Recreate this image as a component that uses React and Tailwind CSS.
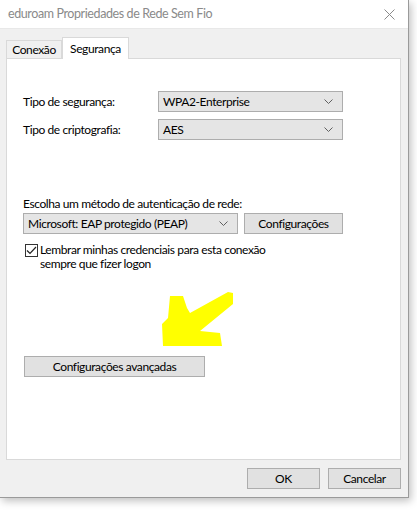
import React from "react";

const font = { fontFamily: 'Lato, "Noto Sans", sans-serif', letterSpacing: "-0.4px" };

function Chevron() {
  return (
    <svg width="9" height="5" viewBox="0 0 9 5" className="shrink-0">
      <path d="M0.5 0.5 L4.5 4.5 L8.5 0.5" fill="none" stroke="#606060" strokeWidth="1" />
    </svg>
  );
}

function Select({ value, className }) {
  return (
    <div className={`h-[21px] flex items-center justify-between pl-[4px] pr-[9px] bg-[#e5e5e5] border border-[#adadad] text-[12px] text-black ${className}`}>
      <span>{value}</span>
      <Chevron />
    </div>
  );
}

function Button({ children, className }) {
  return (
    <div className={`h-[21px] flex items-center justify-center bg-[#e1e1e1] border border-[#adadad] text-[12px] text-black ${className}`}>
      {children}
    </div>
  );
}

export default function App() {
  return (
    <div className="w-[417px] h-[514px] bg-white overflow-hidden" style={font}>
      <div className="w-[409px] h-[498px] flex flex-col bg-[#f0f0f0] border-r border-b border-[#9a9a9a] shadow-[2px_3px_8px_rgba(0,0,0,0.25)]">
        {/* Title bar */}
        <div className="h-[29px] bg-white flex items-center justify-between pl-[8px] pr-[13px] border-b border-[#e8e8e8]">
          <span className="text-[12.5px] text-[#8a8a8a]">eduroam Propriedades de Rede Sem Fio</span>
          <svg width="11" height="11" viewBox="0 0 11 11">
            <path d="M0.5 0.5 L10.5 10.5 M10.5 0.5 L0.5 10.5" stroke="#8a8a8a" strokeWidth="1" />
          </svg>
        </div>

        {/* Tabs */}
        <div className="flex items-end pl-[6px] pt-[8px] h-[29px]">
          <div className="h-[18px] w-[56px] flex items-center justify-center bg-[#f0f0f0] border border-b-0 border-[#d9d9d9] text-[12px] text-black">
            Conexão
          </div>
          <div className="relative h-[22px] w-[67px] flex items-center justify-center bg-white border border-b-0 border-[#d9d9d9] text-[12px] text-black -mb-px z-10">
            Segurança
          </div>
        </div>

        {/* Panel */}
        <div className="mx-[6px] w-[395px] h-[402px] bg-white border border-[#d9d9d9] pl-[16px] pt-[32px] text-[12px] text-black">
          <div className="flex items-center">
            <span className="w-[135px]">Tipo de segurança:</span>
            <Select value="WPA2-Enterprise" className="w-[185px]" />
          </div>
          <div className="flex items-center mt-[7px]">
            <span className="w-[135px]">Tipo de criptografia:</span>
            <Select value="AES" className="w-[185px]" />
          </div>

          <div className="mt-[57px] leading-[14px]">Escolha um método de autenticação de rede:</div>
          <div className="flex items-center mt-[2px] gap-[6px]">
            <Select value="Microsoft: EAP protegido (PEAP)" className="w-[215px]" />
            <Button className="w-[99px]">Configurações</Button>
          </div>

          <div className="flex items-start mt-[10px] pl-[2px]">
            <div className="w-[13px] h-[13px] border border-[#333] bg-white flex items-center justify-center shrink-0">
              <svg width="11" height="9" viewBox="0 0 11 9">
                <path d="M1 4.5 L4 7.5 L10 1" fill="none" stroke="#222" strokeWidth="1.2" />
              </svg>
            </div>
            <div className="ml-[2px] leading-[14px] -mt-[1px]">
              <div>Lembrar minhas credenciais para esta conexão</div>
              <div>sempre que fizer logon</div>
            </div>
          </div>

          <div className="relative h-[85px]">
            <svg className="absolute left-[132px] top-[18px]" width="80" height="62" viewBox="155 288 80 62">
              <polygon
                points="170,295 183,295 187,307 190,312 228,291 233,292 233,303 200,330 220,332 222,345 163,345 162,323 168,317"
                fill="#ffff00"
              />
            </svg>
          </div>

          <Button className="w-[181px] ml-[1px]">Configurações avançadas</Button>
        </div>

        {/* Footer buttons */}
        <div className="flex justify-end gap-[8px] pr-[7px] pt-[8px]">
          <Button className="w-[73px]">OK</Button>
          <Button className="w-[73px]">Cancelar</Button>
        </div>
      </div>
    </div>
  );
}
